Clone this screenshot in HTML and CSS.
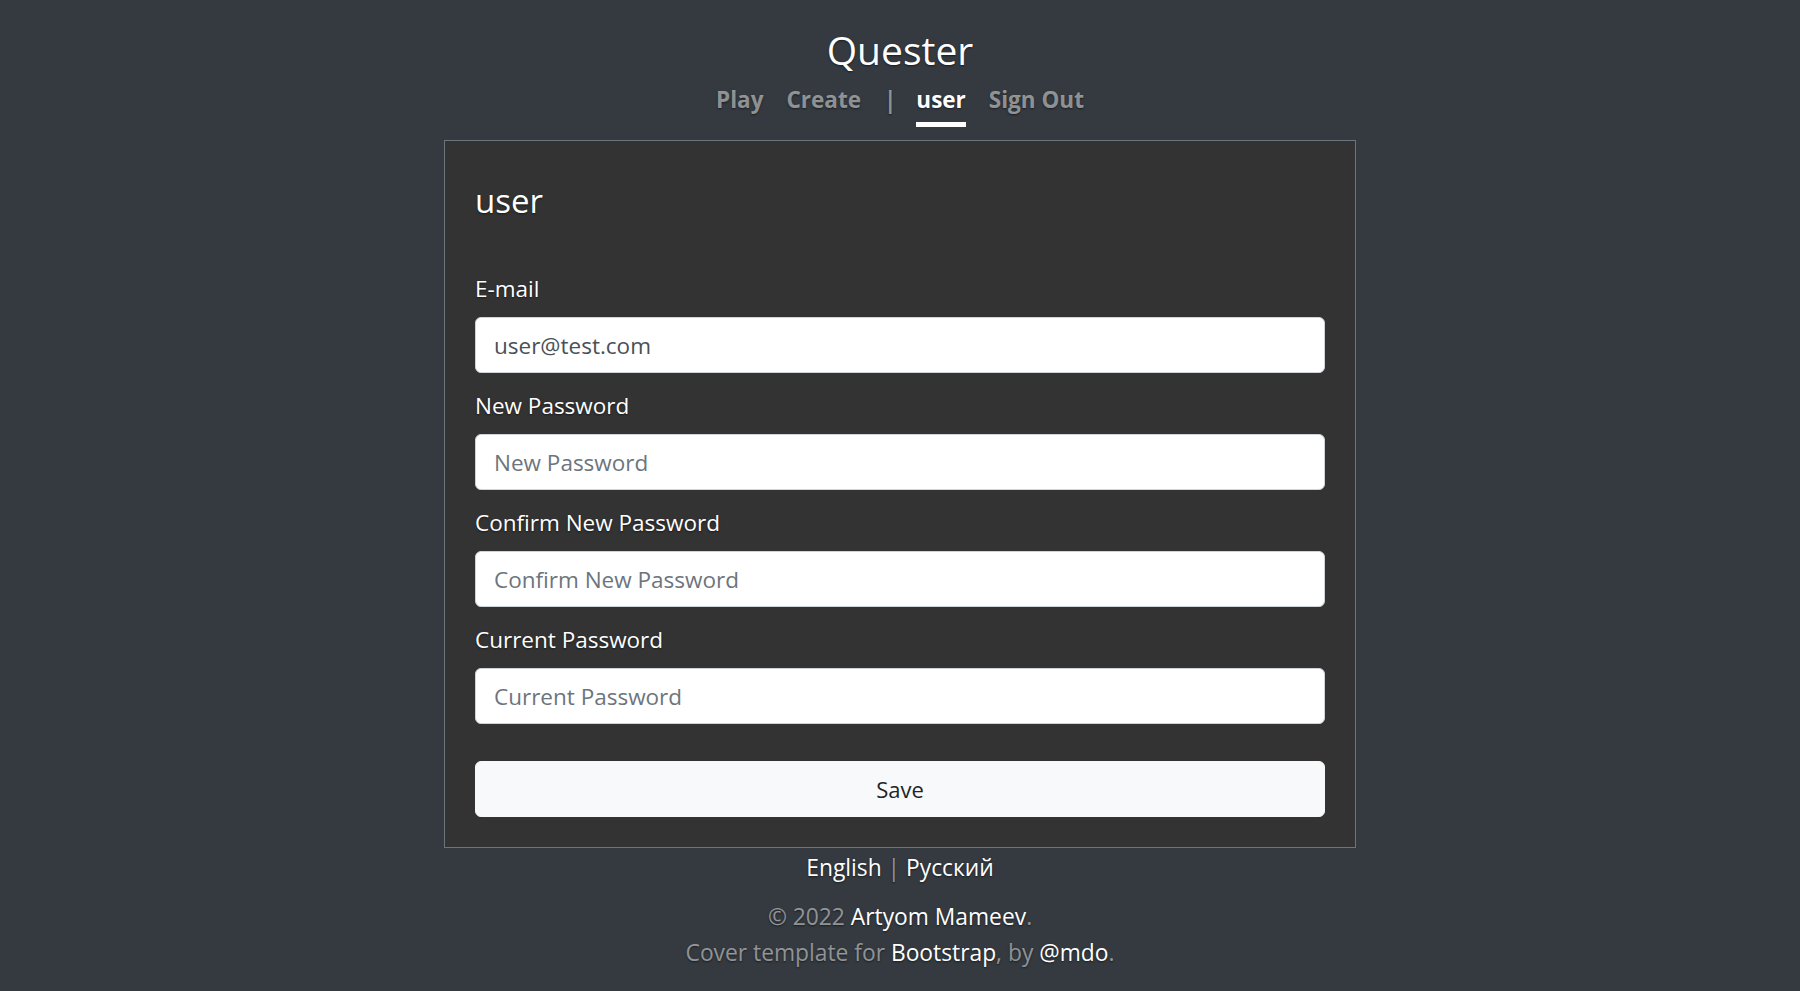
FILE: index.html
```html
<!DOCTYPE html>
<html lang="en">
<head>
<meta charset="utf-8">
<title>Quester</title>
<link rel="stylesheet" href="styles.css">
</head>
<body>
<div class="cover">
  <header class="masthead">
    <h3 class="brand">Quester</h3>
    <nav class="nav">
      <a class="nav-link" href="#">Play</a>
      <a class="nav-link" href="#">Create</a>
      <span class="nav-sep">|</span>
      <a class="nav-link active" href="#">user</a>
      <a class="nav-link" href="#">Sign Out</a>
    </nav>
  </header>

  <main class="card">
    <h2 class="card-title">user</h2>
    <form class="form">
      <div class="group">
        <label class="label" for="email">E-mail</label>
        <input class="input" id="email" type="text" value="user@test.com">
      </div>
      <div class="group">
        <label class="label" for="np">New Password</label>
        <input class="input" id="np" type="password" placeholder="New Password">
      </div>
      <div class="group">
        <label class="label" for="cnp">Confirm New Password</label>
        <input class="input" id="cnp" type="password" placeholder="Confirm New Password">
      </div>
      <div class="group">
        <label class="label" for="cp">Current Password</label>
        <input class="input" id="cp" type="password" placeholder="Current Password">
      </div>
      <button class="btn-save" type="button">Save</button>
    </form>
  </main>

  <footer class="footer">
    <div class="langs"><a href="#">English</a> <span class="muted">|</span> <a href="#">Русский</a></div>
    <p class="muted copy">© 2022 <a href="#">Artyom Mameev</a>.</p>
    <p class="muted credit">Cover template for <a href="#">Bootstrap</a>, by <a href="#">@mdo</a>.</p>
  </footer>
</div>
</body>
</html>
```

FILE: styles.css
```css
* { box-sizing: border-box; }

html, body {
  margin: 0;
  padding: 0;
  height: 100%;
}

body {
  background: #343a40;
  color: #fff;
  font-family: "Open Sans", "Noto Sans", sans-serif;
  text-align: center;
  text-shadow: 0 1px 2px rgba(0, 0, 0, 0.5);
}

a { color: #fff; text-decoration: none; }

.cover {
  width: 912px;
  margin: 0 auto;
  display: flex;
  flex-direction: column;
}

.masthead {
  padding-top: 26px;
  display: flex;
  flex-direction: column;
  align-items: center;
}

.brand {
  margin: 0;
  font-size: 39px;
  font-weight: 400;
  line-height: 47px;
}

.nav {
  display: flex;
  justify-content: center;
  align-items: flex-start;
  gap: 23px;
  margin-top: 11px;
}

.nav-link, .nav-sep {
  font-size: 22.5px;
  font-weight: 700;
  line-height: 32px;
  padding-bottom: 6px;
  border-bottom: 5px solid transparent;
  color: rgba(255, 255, 255, 0.5);
}

.nav-sep { margin-right: -3px; }

.nav-link.active {
  color: #fff;
  border-bottom-color: #fff;
}

.card {
  margin-top: 13px;
  background: #333333;
  border: 1px solid #6c757d;
  padding: 30px 30px 30px;
  text-align: left;
}

.card-title {
  margin: 0;
  font-size: 33px;
  font-weight: 400;
  line-height: 60px;
}

.form {
  margin-top: 41px;
  display: flex;
  flex-direction: column;
}

.group {
  display: flex;
  flex-direction: column;
  margin-bottom: 16px;
}

.label {
  font-size: 22.5px;
  line-height: 33px;
  margin-bottom: 12px;
}

.input {
  height: 56px;
  width: 100%;
  padding: 0 18px;
  border: 1px solid #ced4da;
  border-radius: 6px;
  background: #fff;
  color: #495057;
  font-family: "Open Sans", "Noto Sans", sans-serif;
  font-size: 22.5px;
  outline: none;
}

.input::placeholder { color: #6c757d; }

.btn-save {
  margin-top: 21px;
  height: 56px;
  width: 100%;
  background: #f8f9fa;
  border: 1px solid #f8f9fa;
  border-radius: 6px;
  color: #212529;
  font-family: "Open Sans", "Noto Sans", sans-serif;
  font-size: 22px;
}

.footer {
  font-size: 22.8px;
  line-height: 36px;
  padding-top: 2px;
}

.footer p { margin: 0; }

.langs { margin-bottom: 13px; }

.muted { color: rgba(255, 255, 255, 0.5); }
```
